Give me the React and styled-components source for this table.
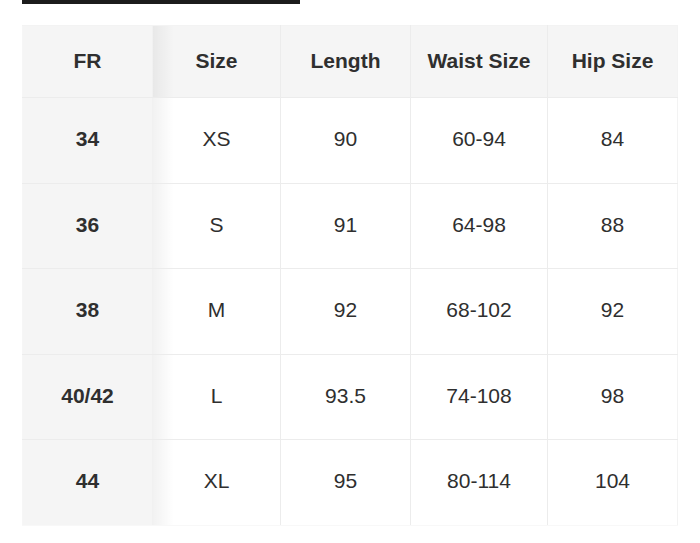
import React from 'react'
import styled, { createGlobalStyle } from 'styled-components'

const GlobalStyle = createGlobalStyle`
  html, body {
    margin: 0;
    padding: 0;
    background: #ffffff;
  }
  body {
    font-family: "Liberation Sans", Arial, sans-serif;
    color: #2f2f2f;
  }
`

const Page = styled.div`
  width: 700px;
  height: 543px;
  padding-left: 22px;
  box-sizing: border-box;
  overflow: hidden;
`

const TopBar = styled.div`
  width: 278px;
  height: 4px;
  background: #1c1c1c;
  margin-bottom: 21px;
`

const Table = styled.table`
  width: 655px;
  border-collapse: collapse;
  table-layout: fixed;
  font-size: 21px;

  tr > *:first-child {
    border-left-color: #f6f6f6;
  }
  tr > *:last-child {
    border-right-color: #f3f3f3;
  }
  thead tr > * {
    border-top-color: #f3f3f3;
  }
  tbody tr:last-child > * {
    border-bottom-color: #f8f8f8;
  }
`

const Cell = styled.td`
  position: relative;
  text-align: center;
  vertical-align: middle;
  padding: 0 0 2px;
  border: 1px solid #ececec;
  color: #2f2f2f;
  background: ${({ $shaded }) => ($shaded ? '#f5f5f5' : '#ffffff')};
  font-weight: ${({ $bold }) => ($bold ? 700 : 400)};
  border-right-color: ${({ $sticky }) => ($sticky ? 'transparent' : '#ececec')};

  ${({ $sticky }) =>
    $sticky &&
    `
    &::after {
      content: '';
      position: absolute;
      top: 0;
      bottom: 0;
      right: -22px;
      width: 22px;
      background: linear-gradient(to right, rgba(0, 0, 0, 0.055), rgba(0, 0, 0, 0));
      pointer-events: none;
      z-index: 1;
    }
  `}
`

const HeadRow = styled.tr`
  height: 72px;
`

const BodyRow = styled.tr`
  height: 85.5px;
`

const widths = [130, 128, 130, 137, 130]
const headers = ['FR', 'Size', 'Length', 'Waist Size', 'Hip Size']
const rows = [
  ['34', 'XS', '90', '60-94', '84'],
  ['36', 'S', '91', '64-98', '88'],
  ['38', 'M', '92', '68-102', '92'],
  ['40/42', 'L', '93.5', '74-108', '98'],
  ['44', 'XL', '95', '80-114', '104'],
]

const App = () => {
  return (
    <Page>
      <GlobalStyle />
      <TopBar />
      <Table>
        <colgroup>
          {widths.map((w, i) => (
            <col key={i} style={{ width: w }} />
          ))}
        </colgroup>
        <thead>
          <HeadRow>
            {headers.map((h, i) => (
              <Cell as="th" key={h} $shaded $bold $sticky={i === 0}>
                {h}
              </Cell>
            ))}
          </HeadRow>
        </thead>
        <tbody>
          {rows.map((r) => (
            <BodyRow key={r[0]}>
              {r.map((v, i) => (
                <Cell key={i} $shaded={i === 0} $bold={i === 0} $sticky={i === 0}>
                  {v}
                </Cell>
              ))}
            </BodyRow>
          ))}
        </tbody>
      </Table>
    </Page>
  )
}

export default App
